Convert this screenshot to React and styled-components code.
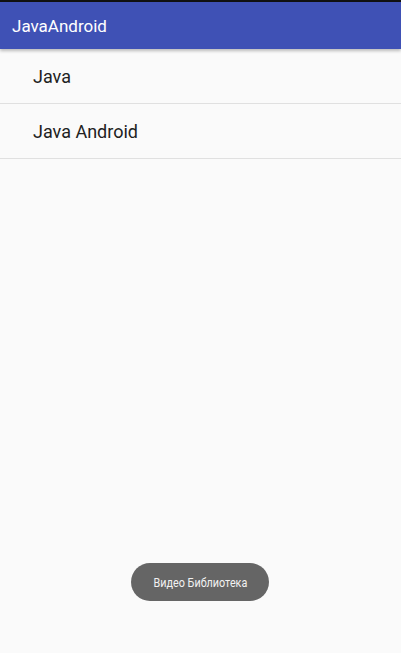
import React from "react";
import styled, { createGlobalStyle } from "styled-components";

const Global = createGlobalStyle`
  html, body { margin: 0; padding: 0; }
  body { background: #fafafa; font-family: Roboto, "Noto Sans", sans-serif; }
`;

const Screen = styled.div`
  width: 401px;
  height: 653px;
  background: #fafafa;
  display: flex;
  flex-direction: column;
  position: relative;
  overflow: hidden;
`;

const StatusStrip = styled.div`
  height: 2px;
  background: #111;
`;

const AppBar = styled.header`
  height: 47px;
  background: #3f51b5;
  display: flex;
  align-items: center;
  padding-left: 12px;
  color: #fff;
  font-size: 17px;
  box-shadow: 0 2px 3px rgba(0, 0, 0, 0.25);
  position: relative;
  z-index: 1;
`;

const List = styled.ul`
  list-style: none;
  margin: 0;
  padding: 0;
`;

const Row = styled.li`
  height: 54px;
  display: flex;
  align-items: center;
  padding-left: 33px;
  font-size: 18px;
  color: #212121;
  border-bottom: 1px solid #e0e0e0;
`;

const Toast = styled.div`
  position: absolute;
  left: 131px;
  top: 563px;
  width: 138px;
  height: 38px;
  border-radius: 19px;
  background: #656565;
  color: #f2f2f2;
  display: flex;
  align-items: center;
  justify-content: center;
  font-family: Roboto, sans-serif;
  font-size: 13px;
`;

const ToastText = styled.span`
  display: inline-block;
  white-space: nowrap;
  transform: scaleX(0.83);
`;

export default function App() {
  return (
    <>
      <Global />
      <Screen>
        <StatusStrip />
        <AppBar>JavaAndroid</AppBar>
        <List>
          <Row>Java</Row>
          <Row>Java Android</Row>
        </List>
        <Toast>
          <ToastText>Видео Библиотека</ToastText>
        </Toast>
      </Screen>
    </>
  );
}
